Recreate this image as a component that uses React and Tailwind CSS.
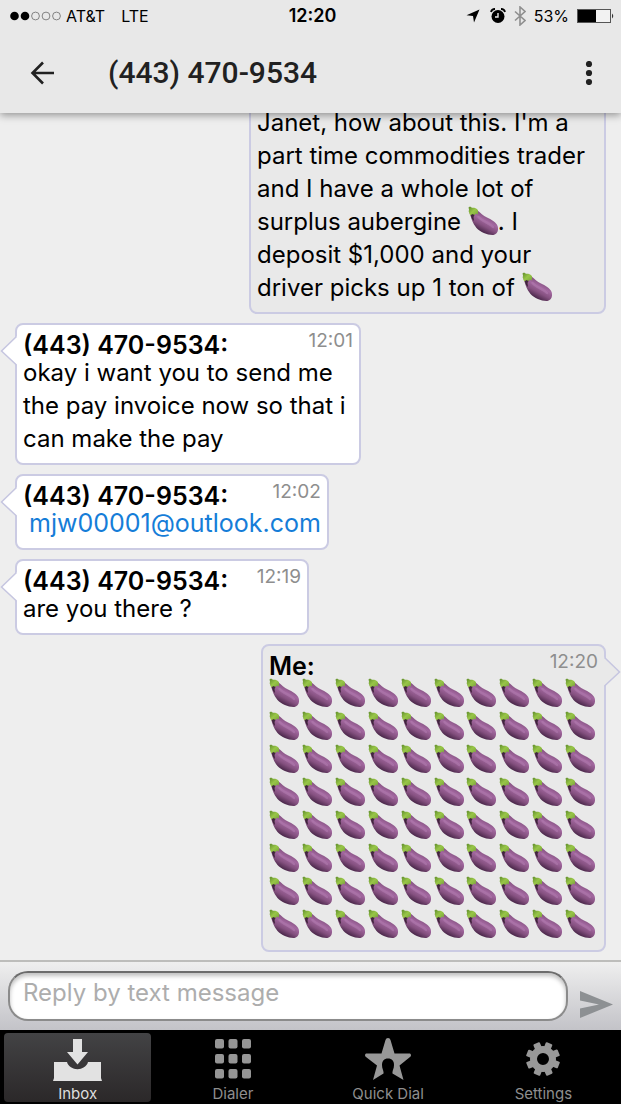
import React from "react";

function EggplantSprite() {
  return (
    <svg className="absolute size-0" aria-hidden="true">
      <defs>
        <linearGradient id="skin" gradientUnits="userSpaceOnUse" x1="20" y1="10" x2="12" y2="25">
          <stop offset="0" stopColor="#83507f" />
          <stop offset="0.3" stopColor="#a368a0" />
          <stop offset="0.65" stopColor="#84507f" />
          <stop offset="1" stopColor="#4a274a" />
        </linearGradient>
        <linearGradient id="cap" x1="0" y1="0" x2="1" y2="1">
          <stop offset="0" stopColor="#5d8a2a" />
          <stop offset="0.5" stopColor="#98c548" />
          <stop offset="1" stopColor="#79a838" />
        </linearGradient>
        <symbol id="eggplant" viewBox="0 0 30 30">
          <path
            d="M9.500 4.500C12.500 7 15 9.500 19 11.500C23 13.500 28 16 29.600 20C31 24.500 29 28.500 25.500 28.900C20 29.300 12.500 26.500 8.500 22C4.500 17.500 3.500 12.500 1.500 7C3.500 4 6 3 9.500 4.500Z"
            fill="url(#skin)"
          />
          <path
            d="M10.500 11C14 15.500 21 16.500 25 21"
            fill="none"
            stroke="#b67fb4"
            strokeWidth="2.500"
            strokeLinecap="round"
            opacity="0.500"
          />
          <path d="M2 7L7 8L5.500 11L6 15L4 13Z" fill="#2c1829" opacity="0.800" />
          <path
            d="M0.500 1.500L2 0.500L4 1.800C6 1.600 8.500 2 10 4.300L9.800 8.500L8 7.500L6.500 9L4.500 8L2.200 9.500L0.700 5.500L1 3.500Z"
            fill="url(#cap)"
          />
        </symbol>
      </defs>
    </svg>
  );
}

function Eggplant({ className = "" }) {
  return (
    <svg role="img" aria-label="aubergine" className={"size-[30px] " + className}>
      <use href="#eggplant" />
    </svg>
  );
}

function StatusBar() {
  return (
    <div className="grid h-8 grid-cols-3 items-center px-2.5 text-base text-black">
      <div className="flex items-center">
        <svg viewBox="0 0 52 10" className="mr-1 h-2.5 w-[52px]" aria-hidden="true">
          <circle cx="4.500" cy="5" r="4.300" />
          <circle cx="15" cy="5" r="4.300" />
          <g fill="none" stroke="#777" strokeWidth="0.900">
            <circle cx="25.500" cy="5" r="3.900" />
            <circle cx="36" cy="5" r="3.900" />
            <circle cx="46.500" cy="5" r="3.900" />
          </g>
        </svg>
        <span>AT&amp;T</span>
        <span className="ml-4">LTE</span>
      </div>
      <time className="pl-1 text-center text-lg font-semibold">12:20</time>
      <div className="flex items-center justify-end">
        <svg viewBox="0 0 14 14" className="mr-2.5 size-3.5" aria-hidden="true">
          <path d="M13.500 0.500L8 13.500L7 7L0.500 6.200Z" />
        </svg>
        <svg viewBox="0 0 16 16" className="mr-2 size-4" aria-hidden="true">
          <circle cx="8" cy="8.500" r="6.500" />
          <path d="M1 4A4 4 0 0 1 5 1M11 1A4 4 0 0 1 15 4" fill="none" stroke="#000" strokeWidth="1.800" />
          <path d="M8 5V9H5" fill="none" stroke="#e8e8e8" strokeWidth="1.400" />
        </svg>
        <svg viewBox="0 0 12 20" className="mr-2 h-5 w-3" fill="none" stroke="#8f8f8f" strokeWidth="1.600" aria-hidden="true">
          <path d="M1 5.500L11 14.500L6 19V1L11 5.500L1 14.500" />
        </svg>
        <span>53%</span>
        <svg viewBox="0 0 38 16" className="-mr-1 ml-2 h-4 w-[38px]" aria-hidden="true">
          <rect x="0.500" y="1.500" width="33" height="13" fill="#f2f2f2" stroke="#555" strokeWidth="1" />
          <rect x="1" y="2" width="18" height="12" />
          <path d="M35 5.500Q37.500 8 35 10.500Z" fill="#333" />
        </svg>
      </div>
    </div>
  );
}

function Header() {
  return (
    <header className="relative z-10 bg-[#e8e8e8] shadow-[0_2px_8px_rgba(0,0,0,0.4)]">
      <StatusBar />
      <div className="flex h-[81px] items-center pl-[30px] pr-5">
        <button type="button" aria-label="Back" className="text-[#212121]">
          <svg viewBox="0 0 24 24" className="block size-6" fill="none" stroke="currentColor" strokeWidth="2.600">
            <path d="M24 12H2.500M13 1.500L2.500 12L13 22.500" />
          </svg>
        </button>
        <h1 className="ml-[54px] grow font-['Roboto',sans-serif] text-[30px] font-medium text-[#212121]">
          (443) 470-9534
        </h1>
        <button type="button" aria-label="More options" className="text-[#212121]">
          <svg viewBox="0 0 24 24" className="block size-6" fill="currentColor">
            <circle cx="12" cy="3" r="3.100" />
            <circle cx="12" cy="12" r="3.100" />
            <circle cx="12" cy="21" r="3.100" />
          </svg>
        </button>
      </div>
    </header>
  );
}

function Tail({ mine }) {
  return (
    <svg
      viewBox="0 0 18 34"
      className={
        mine
          ? "absolute left-full top-2 -ml-px h-[34px] w-[18px] -scale-x-100"
          : "absolute right-full top-2 -mr-px h-[34px] w-[18px]"
      }
      aria-hidden="true"
    >
      <path d="M18 2L1.500 18L18 33Z" fill={mine ? "#e9e9e9" : "#fff"} />
      <path d="M16.500 3.500L1.500 18L16.500 32" fill="none" stroke="#c6c6e0" strokeWidth="1.500" />
    </svg>
  );
}

function Bubble({ mine, name, time, width = "", children }) {
  return (
    <article
      className={
        "relative rounded-lg border-2 border-[#cbcbe3] px-1.5 pb-2 pt-2 " +
        (mine ? "self-end bg-[#e9e9e9] " : "self-start bg-white ") +
        width
      }
    >
      {name && <Tail mine={mine} />}
      {name && (
        <header className="flex h-[23px] items-center justify-between gap-[18px]">
          <h2 className="text-[25px] font-semibold leading-6">{name}:</h2>
          <time className="self-start text-[19px] leading-4 text-[#8e8e8e]">{time}</time>
        </header>
      )}
      {children}
    </article>
  );
}

function Tab({ label, active, children }) {
  return (
    <button
      type="button"
      aria-current={active ? "page" : undefined}
      className={
        "mx-1 flex flex-1 flex-col items-center justify-end rounded-sm " +
        (active
          ? "bg-linear-to-b from-[#434345] to-[#2b2829] text-[#dedede]"
          : "text-[#8e8e8e]")
      }
    >
      {children}
      <span className="mt-1 text-[15px] leading-4">{label}</span>
    </button>
  );
}

const spots = [0, 1, 2];
const teeth = [0, 45, 90, 135, 180, 225, 270, 315];

export default function App() {
  return (
    <div className="flex h-screen flex-col bg-[#eeeeee] font-['Inter','Liberation_Sans',sans-serif] text-black">
      <EggplantSprite />
      <Header />

      <main className="flex min-h-0 flex-1 flex-col justify-end gap-[9px] overflow-hidden px-[15px] pb-2 text-2xl leading-[33px] *:shrink-0">
        <Bubble mine width="w-[357px]">
          <p>
            Janet, how about this. I'm a part time commodities trader and I have a whole lot of
            surplus aubergine <Eggplant className="inline-block align-[-6px]" />. I deposit $1,000
            and your driver picks up 1 ton of <Eggplant className="inline-block align-[-6px]" />
          </p>
        </Bubble>
        <Bubble name="(443) 470-9534" time="12:01" width="w-[346px]">
          <p>okay i want you to send me the pay invoice now so that i can make the pay</p>
        </Bubble>
        <Bubble name="(443) 470-9534" time="12:02">
          <p className="pl-1.5">
            <a href="mailto:mjw00001@outlook.com" className="text-[25px] text-[#157dd8]">
              mjw00001@outlook.com
            </a>
          </p>
        </Bubble>
        <Bubble name="(443) 470-9534" time="12:19" width="min-w-[294px]">
          <p>are you there ?</p>
        </Bubble>
        <Bubble mine name="Me" time="12:20" width="w-[345px]">
          <div className="grid auto-rows-[33px] grid-cols-10 pt-px">
            {Array.from({ length: 80 }, (_, i) => (
              <Eggplant key={i} />
            ))}
          </div>
        </Bubble>
      </main>

      <form
        onSubmit={(e) => e.preventDefault()}
        className="flex items-start border-t-2 border-[#bdbdbb] bg-linear-to-b from-[#efefef] to-[#c3c3c8] px-2 py-[9px]"
      >
        <input
          type="text"
          aria-label="Reply by text message"
          placeholder="Reply by text message"
          className="h-[50px] min-w-0 flex-1 rounded-[20px] border-2 border-[#8b8b8b] border-t-[#6c6c6c] bg-white px-[13px] pb-2 text-2xl shadow-[inset_0_3px_4px_rgba(0,0,0,0.25)] placeholder:text-[#adadad]"
        />
        <button type="submit" aria-label="Send" className="ml-3 mt-5 text-[#8d9093]">
          <svg viewBox="0 0 33 27" className="block h-[27px] w-[33px]" fill="currentColor">
            <path d="M0 0L33 13.500L0 27V17.500L19 13.500L0 9.500Z" />
          </svg>
        </button>
      </form>

      <nav className="flex h-[74px] bg-black pb-0.5 pt-[3px]">
        <Tab label="Inbox" active>
          <svg viewBox="0 0 50 44" className="h-11 w-[50px]" fill="#e2e2e2">
            <path d="M1 24H14C16.500 33.500 32.500 33.500 35 24H48V40L49 43H0L1 40Z" />
            <path d="M20 1H29V14H35L24.500 26.500L14 14H20Z" />
          </svg>
        </Tab>
        <Tab label="Dialer">
          <svg viewBox="0 0 36 44" className="h-11 w-9" fill="#959595">
            {spots.map((r) =>
              spots.map((c) => (
                <rect key={r + "-" + c} x={c * 13.500} y={1 + r * 15} width="9" height="9.500" rx="2" />
              ))
            )}
          </svg>
        </Tab>
        <Tab label="Quick Dial">
          <svg viewBox="0 0 46 44" className="h-11 w-[46px]" fill="#989898">
            <path d="M23 0Q25 0 25.500 2L29.500 15.500H45Q47 17 45 19L34.500 27.500L38.500 42L27.500 35.500C27 33 29 31 29 27C29 23 27 20.500 23 20.500C19 20.500 17 23 17 27C17 31 19 33 18.500 35.500L8 42L12 27.500L1 19Q-1 17 1 15.500H16.500L20.500 2Q21 0 23 0Z" />
          </svg>
        </Tab>
        <Tab label="Settings">
          <svg viewBox="0 0 34 44" className="h-11 w-[34px]" fill="#989898">
            {teeth.map((angle) => (
              <rect key={angle} x="13.500" y="4" width="7" height="8" rx="1" transform={"rotate(" + (angle + 22) + " 17 21)"} />
            ))}
            <circle cx="17" cy="21" r="9.500" fill="none" stroke="#989898" strokeWidth="7" />
          </svg>
        </Tab>
      </nav>
    </div>
  );
}
